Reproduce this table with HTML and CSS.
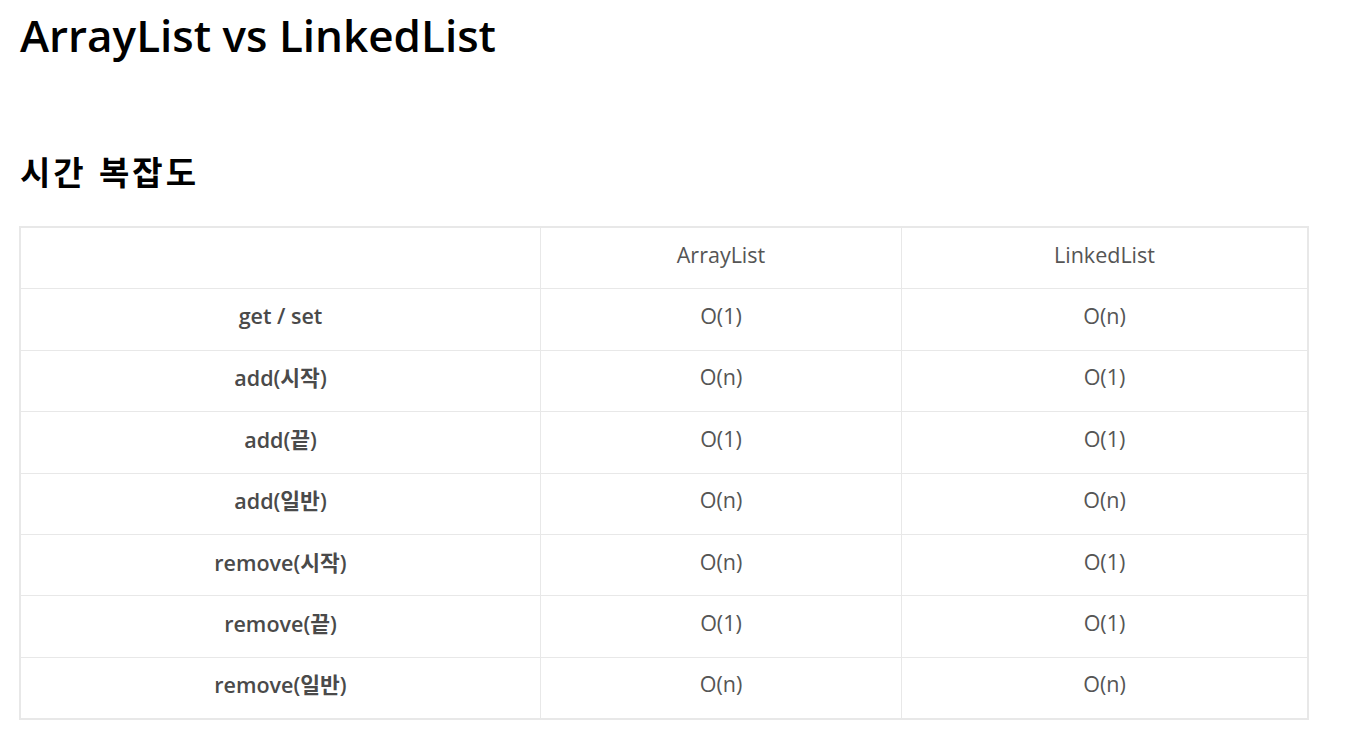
FILE: index.html
```html
<!DOCTYPE html>
<html lang="ko">
<head>
<meta charset="utf-8">
<link rel="stylesheet" href="styles.css">
</head>
<body>
<main class="page">
  <h1 class="title">ArrayList vs LinkedList</h1>
  <h2 class="subtitle">시간 복잡도</h2>
  <table class="cmp">
    <thead>
      <tr><th></th><th>ArrayList</th><th>LinkedList</th></tr>
    </thead>
    <tbody>
      <tr><td class="op">get / set</td><td>O(1)</td><td>O(n)</td></tr>
      <tr><td class="op">add(시작)</td><td>O(n)</td><td>O(1)</td></tr>
      <tr><td class="op">add(끝)</td><td>O(1)</td><td>O(1)</td></tr>
      <tr><td class="op">add(일반)</td><td>O(n)</td><td>O(n)</td></tr>
      <tr><td class="op">remove(시작)</td><td>O(n)</td><td>O(1)</td></tr>
      <tr><td class="op">remove(끝)</td><td>O(1)</td><td>O(1)</td></tr>
      <tr><td class="op">remove(일반)</td><td>O(n)</td><td>O(n)</td></tr>
    </tbody>
  </table>
</main>
</body>
</html>
```

FILE: styles.css
```css
html, body {
  margin: 0;
  padding: 0;
  background: #fff;
}
body {
  font-family: "Open Sans", "Noto Sans CJK KR", sans-serif;
  color: #000;
}
.page {
  padding: 0 20px;
}
.title {
  margin: 0;
  padding-top: 9px;
  font-size: 44px;
  font-weight: 600;
  line-height: 52px;
}
.subtitle {
  margin: 89px 0 0;
  font-family: "Noto Sans CJK KR", sans-serif;
  font-size: 33px;
  font-weight: 700;
  line-height: 42px;
  letter-spacing: 3px;
}
.cmp {
  margin-top: 34px;
  margin-left: -1px;
  width: 1290px;
  border-collapse: collapse;
  border: 2px solid #e8e8e8;
  font-size: 21.5px;
  color: #555;
}
.cmp th, .cmp td {
  border: 1px solid #e8e8e8;
  height: 52.4px;
  padding: 0 0 8px;
  text-align: center;
  font-weight: 400;
}
.cmp th:first-child, .cmp td:first-child { width: 519px; }
.cmp th:nth-child(2), .cmp td:nth-child(2) { width: 360px; }
.cmp td.op {
  font-weight: 600;
  color: #4a4a4a;
}
```
